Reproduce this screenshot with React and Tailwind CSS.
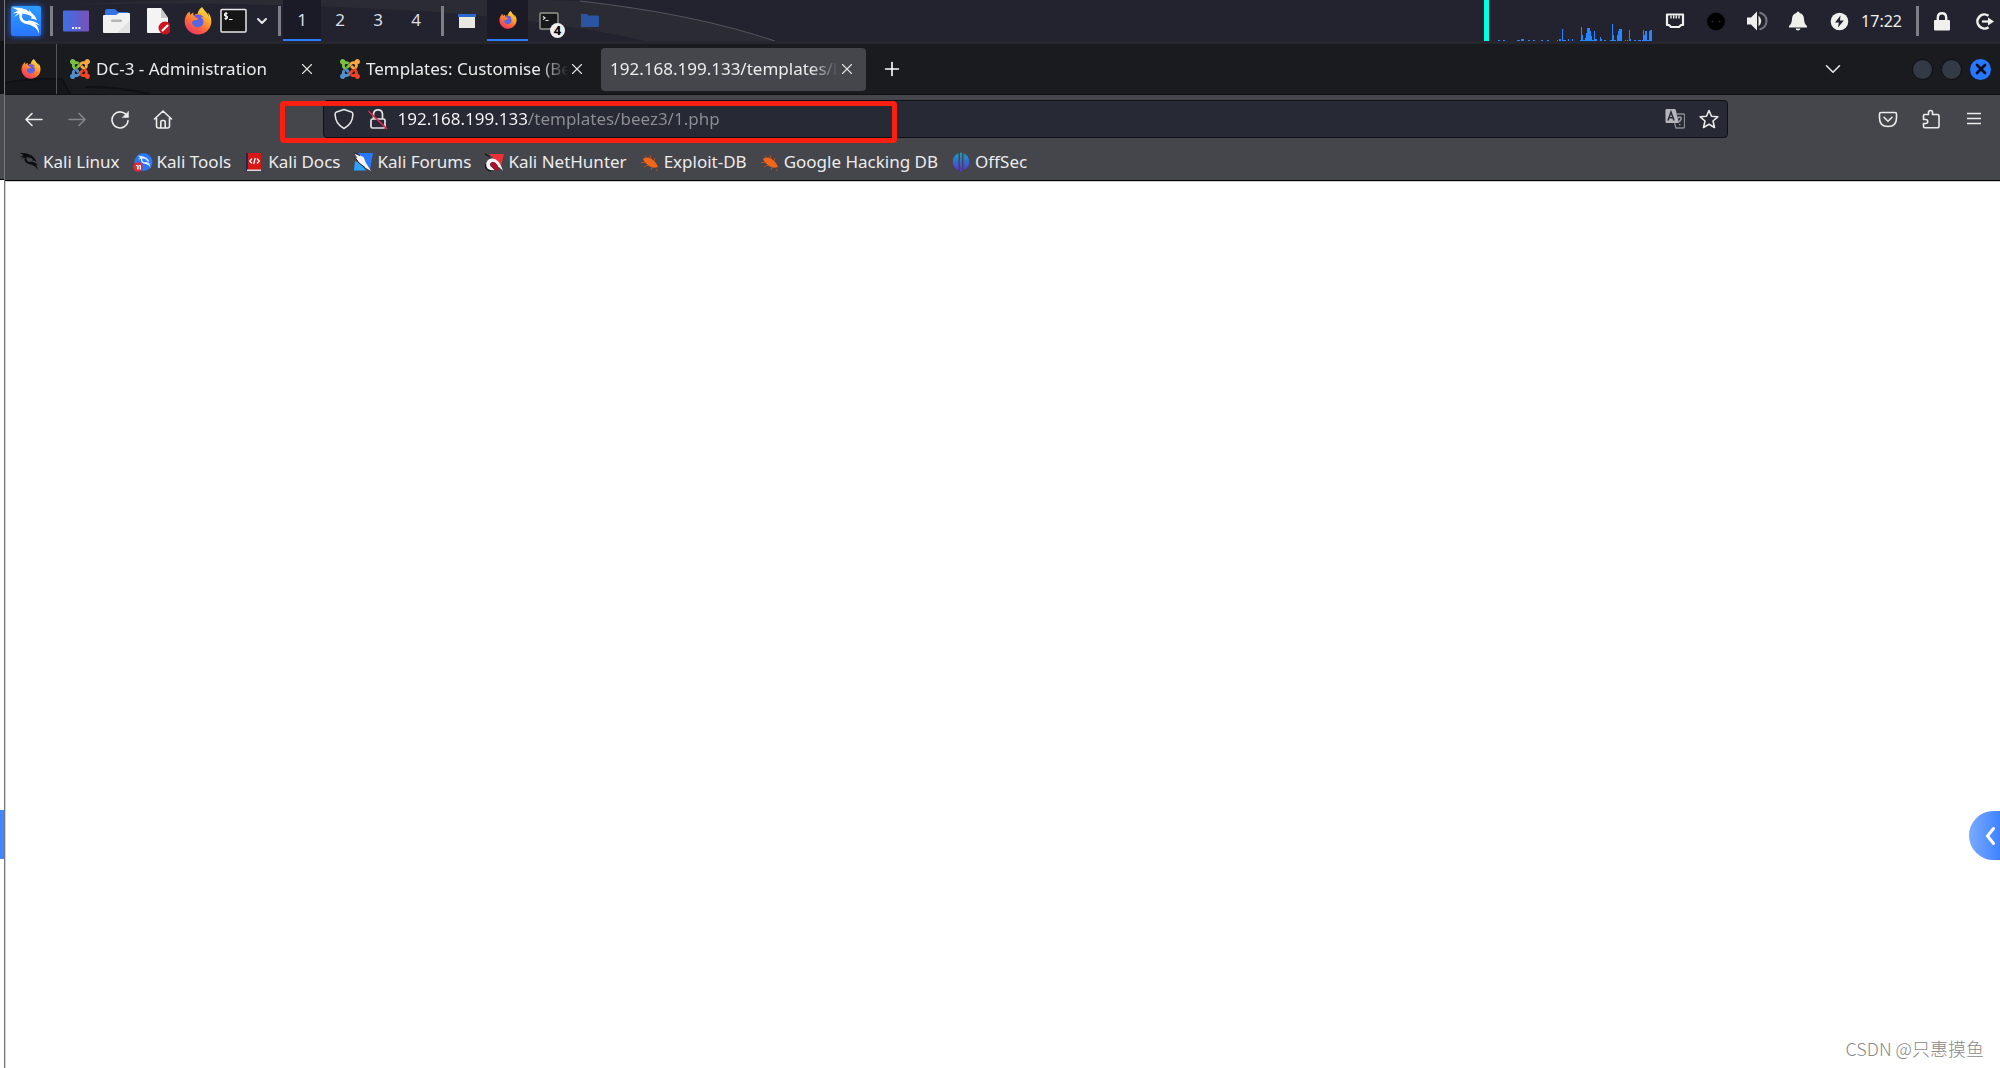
import React, { useState } from 'react'
import { FaFirefoxBrowser } from 'react-icons/fa'
import { SiJoomla } from 'react-icons/si'
import { ChevronDown, Plus, X } from 'lucide-react'

// [x, width, height] of each bar in the CPU graph
const CPU_BARS = [
  [9, 2, 1], [14, 2, 1], [28, 3, 1], [32, 3, 2], [39, 2, 1], [44, 2, 1], [52, 2, 1], [58, 2, 1],
  [68, 1, 1], [70, 2, 2], [73, 1, 12], [74, 3, 1], [79, 1, 2], [83, 1, 2], [91, 14, 1], [92, 1, 14],
  [93, 1, 6], [96, 1, 3], [97, 1, 8], [98, 3, 13], [101, 1, 10], [102, 1, 5], [105, 1, 10],
  [106, 2, 2], [111, 1, 4], [112, 1, 2], [115, 2, 1], [121, 6, 1], [123, 1, 17], [124, 1, 6],
  [128, 1, 6], [129, 1, 10], [130, 3, 12], [136, 1, 1], [138, 1, 1], [140, 1, 11], [141, 1, 2],
  [145, 2, 1], [149, 3, 1], [153, 9, 1], [154, 1, 11], [155, 1, 6], [156, 2, 10], [160, 1, 10], [161, 2, 11],
]

// Kali dragon on a 30x30 grid
const dragon = (
  <g fill="currentColor">
    <path d="M1 1.500Q9 1 15 3.500L18.500 6 18 3.500 21 7.500Q24 9 26 14.500L23 13 19.500 12.500Q22 11.500 19 9.500 15 7.800 11.500 7.500 9.800 13 14 14.700 22 15.500 25.500 19 28 22 28 27.500 26.500 23.500 24 21.500 20 18.500 13.500 17.500 7.500 15.500 8.300 7.800L3 11 7 6.800 1.500 7.500 7 4.500z" />
    <path d="M17 14.500Q24 14.500 29 19.500 24 17 17 17z" />
  </g>
)

function Firefox({ className }) {
  return (
    <svg viewBox="0 0 28 28" className={className} aria-hidden="true">
      <circle cx="14" cy="15" r="8" fill="url(#globe)" />
      <FaFirefoxBrowser size={28} fill="url(#fox)" />
    </svg>
  )
}

function Joomla() {
  const quarters = [
    ['jtl', '#7ac143'],
    ['jtr', '#f9a541'],
    ['jbl', '#5091cd'],
    ['jbr', '#f44321'],
  ]
  return (
    <svg viewBox="0 0 20 20" className="h-5 w-5 shrink-0" aria-hidden="true">
      {quarters.map(([id, color]) => (
        <g key={id} clipPath={`url(#${id})`}>
          <SiJoomla size={20} color={color} />
        </g>
      ))}
    </svg>
  )
}

// Gradients and clips shared by the icons
function Defs() {
  return (
    <svg className="absolute h-0 w-0" aria-hidden="true">
      <defs>
        <linearGradient id="fox" x1="0.85" y1="0" x2="0.25" y2="1">
          <stop offset="0" stopColor="#fff04a" />
          <stop offset="0.35" stopColor="#ffab2e" />
          <stop offset="0.65" stopColor="#ff6a3a" />
          <stop offset="1" stopColor="#f0306a" />
        </linearGradient>
        <linearGradient id="globe" x1="0" y1="1" x2="1" y2="0">
          <stop offset="0" stopColor="#3b78e8" />
          <stop offset="1" stopColor="#7b4fe0" />
        </linearGradient>
        <linearGradient id="desk" x1="0" y1="0" x2="1" y2="0">
          <stop offset="0" stopColor="#3b6fe8" />
          <stop offset="1" stopColor="#7a52b8" />
        </linearGradient>
        <linearGradient id="offsec" x1="0" y1="0" x2="0" y2="1">
          <stop offset="0" stopColor="#17a2b8" />
          <stop offset="1" stopColor="#5b2be0" />
        </linearGradient>
        <clipPath id="jtl"><path d="M0 0h10v10H0z" /></clipPath>
        <clipPath id="jtr"><path d="M10 0h10v10H10z" /></clipPath>
        <clipPath id="jbl"><path d="M0 10h10v10H0z" /></clipPath>
        <clipPath id="jbr"><path d="M10 10h10v10H10z" /></clipPath>
      </defs>
    </svg>
  )
}

const Separator = ({ className = '' }) => <span className={`h-[30px] w-[3px] shrink-0 bg-[#7d7e86] ${className}`} />

function Launchers() {
  return (
    <div className="flex items-center gap-3">
      <button aria-label="Show desktop">
        <svg viewBox="0 0 28 28" className="h-7 w-7">
          <rect x="1" y="3.5" width="26" height="21" rx="1" fill="url(#desk)" />
          <path d="M10 20h2v2h-2zM13.200 20h2v2h-2zM16.400 20h2v2h-2z" fill="#e8ecff" />
        </svg>
      </button>
      <button aria-label="Files">
        <svg viewBox="0 0 28 28" className="h-7 w-7">
          <path d="M3 4q0-2 2-2h8l3 3h9q2 0 2 2v8H3z" fill="#3572e3" />
          <path d="M1 9q0-1 1-1h12l3-2h10q1 0 1 1v18q0 1-1 1H2q-1 0-1-1z" fill="#f1f1f1" />
          <path d="M28 13v12q0 1-1 1H15z" fill="#e2e2e2" />
          <rect x="9" y="12.500" width="11" height="2.500" rx="1" fill="#b5b5b5" />
        </svg>
      </button>
      <button aria-label="Text editor">
        <svg viewBox="0 0 28 28" className="h-7 w-7">
          <path d="M5 2q0-1 1-1h13l7 10v14q0 1-1 1H6q-1 0-1-1z" fill="#f4f4f4" />
          <path d="M19 1l7 10h-7z" fill="#c9c9c9" />
          <circle cx="23" cy="21" r="6.500" fill="#cf1420" />
          <path d="M20.500 23.500l5-5" stroke="#fff" strokeWidth="2" strokeLinecap="round" />
        </svg>
      </button>
      <button aria-label="Firefox" className="ml-0.5">
        <Firefox className="h-7 w-7" />
      </button>
      <button aria-label="Terminal" className="-ml-1">
        <svg viewBox="0 0 28 28" className="h-7 w-7">
          <rect x="1" y="2.500" width="25" height="22.500" rx="1" fill="#151515" stroke="#e8e8e8" strokeWidth="1.500" />
          <path d="M7.500 6.500q-3-.6-3 1t1.500 1.500 1.500 1.500-3 1M6 5v8M9 12.500h3.500" stroke="#fff" strokeWidth="1.200" fill="none" />
        </svg>
      </button>
    </div>
  )
}

function Tasks() {
  const item = 'relative flex h-[41px] w-[41px] items-center justify-center'
  return (
    <div className="ml-0.5 flex">
      <button aria-label="Window" className={item}>
        <svg viewBox="0 0 18 16" className="h-4 w-[18px]">
          <path d="M0 1h18v3H0z" fill="#2c69cf" />
          <path d="M1 4h16v11H1z" fill="#e9e9e2" />
        </svg>
      </button>
      <button aria-label="Firefox window" className={`${item} border-b-2 border-[#2b7bff] bg-[#1a1b26]`}>
        <Firefox className="h-[18px] w-[18px]" />
      </button>
      <button aria-label="Terminal windows" className={item}>
        <svg viewBox="0 0 20 18" className="h-[18px] w-5">
          <rect x="1" y="1" width="18" height="16" rx="1" fill="#17181a" stroke="#97978f" strokeWidth="1.400" />
          <path d="M4 4.500l2 1.500-2 1.500M6.500 8.500h3" stroke="#e8e8e8" strokeWidth="1.200" fill="none" />
        </svg>
        <span className="absolute bottom-[3px] right-1 h-[15px] w-[15px] rounded-full bg-[#eeeeee] text-[13px] font-bold leading-[15px] text-black">4</span>
      </button>
      <button aria-label="Files window" className={item}>
        <svg viewBox="0 0 18 14" className="h-3.5 w-[18px]">
          <path d="M0 1q0-1 1-1h5l1.500 1.500H17q1 0 1 1V12q0 1-1 1H1q-1 0-1-1z" fill="#2b55a0" />
        </svg>
      </button>
    </div>
  )
}

function Tray() {
  const item = 'flex h-[41px] w-[41px] items-center justify-center text-[#f0f0ec]'
  return (
    <div className="ml-auto flex items-center">
      <div className="h-[41px] w-[5px] bg-[#00ffe0]" />
      <svg viewBox="0 0 165 41" className="h-[41px] w-[165px]" shapeRendering="crispEdges" aria-label="CPU graph">
        {CPU_BARS.map(([x, w, h]) => (
          <rect key={x} x={x} y={41 - h} width={w} height={h} fill="#2686ff" />
        ))}
      </svg>
      <button aria-label="Network" className={item}>
        <svg viewBox="0 0 20 18" className="h-[18px] w-5" fill="none" stroke="currentColor">
          <path d="M2 2.500h16v10.500h-2l-2 2H6L4 13H2z" strokeWidth="2.200" strokeLinejoin="round" />
          <path d="M6 3.500v3M8.700 3.500v3M11.300 3.500v3M14 3.500v3" strokeWidth="1.400" />
        </svg>
      </button>
      <button aria-label="Clipboard" className={item}>
        <svg viewBox="0 0 20 20" className="h-5 w-5">
          <circle cx="10" cy="10.500" r="9" fill="#000" />
          <circle cx="6.500" cy="10.500" r="1.100" fill="#25262c" />
          <circle cx="13.500" cy="10.500" r="1.100" fill="#25262c" />
        </svg>
      </button>
      <button aria-label="Volume" className={item}>
        <svg viewBox="0 0 22 22" className="h-[22px] w-[22px]" fill="none">
          <path d="M1 7.500h4L11 1.500v19L5 14.500H1z" fill="currentColor" />
          <path d="M12.500 5.500q5.500 5.500 0 11z" fill="currentColor" />
          <path d="M13.500 2.500q7 2 7 8.500t-7 8.500" stroke="#74757f" strokeWidth="2" />
        </svg>
      </button>
      <button aria-label="Notifications" className={item}>
        <svg viewBox="0 0 20 20" className="h-5 w-5" fill="currentColor">
          <path d="M10 .5q1.500 0 1.500 1.600Q15.800 3.300 16 8q.2 5 3 7v1.500H1V15q2.800-2 3-7 .2-4.700 4.500-5.900Q8.500.5 10 .5zM7.500 17.500h5Q12 19.500 10 19.500t-2.500-2z" />
        </svg>
      </button>
      <button aria-label="Power" className={item}>
        <svg viewBox="0 0 20 20" className="h-5 w-5">
          <circle cx="10.500" cy="10.500" r="8.800" fill="currentColor" />
          <path d="M11.500 4.500L6 11.500h3.800L9 16.500l5.800-7H11z" fill="#22232f" />
        </svg>
      </button>
      <time className="ml-0.5 mr-3.5 text-base text-[#f0f0ec]">17:22</time>
      <Separator className="mr-[7px]" />
      <div className="flex gap-2.5">
        <button aria-label="Lock" className="flex w-8 justify-center text-[#f0f0ec]">
          <svg viewBox="0 0 18 20" className="h-5 w-[18px]">
            <path d="M4.800 9V6.500Q5 2.200 9 2.200t4.200 4.300V9" fill="none" stroke="currentColor" strokeWidth="2.400" />
            <rect x="1" y="9" width="16" height="10.500" rx="1" fill="currentColor" />
          </svg>
        </button>
        <button aria-label="Log out" className="flex w-8 justify-center text-[#f0f0ec]">
          <svg viewBox="0 0 20 20" className="h-5 w-5" fill="none" stroke="currentColor">
            <path d="M14.500 4.800A7 7 0 1 0 14.500 16.200" strokeWidth="2.600" />
            <path d="M8 10.500h7" strokeWidth="2.200" />
            <path d="M14 6.500l6 4-6 4z" fill="currentColor" stroke="none" />
          </svg>
        </button>
      </div>
    </div>
  )
}

function TaskBar() {
  const [workspace, setWorkspace] = useState(1)
  return (
    <header className="relative flex h-[41px] items-center bg-[#22232f]">
      {/* Wallpaper showing through the panel */}
      <svg className="absolute left-0 top-0 h-[41px] w-[800px]" viewBox="0 0 800 41" aria-hidden="true">
        <path d="M60 5Q300-8 575 1 690 14 770 41H640Q560 22 430 12 240 0 60 5z" fill="#2b2b33" />
        <path d="M575 1Q690 14 770 41" fill="none" stroke="#54555b" />
      </svg>
      <div className="relative flex grow items-center">
        <button aria-label="Applications" className="ml-1.5 mr-[9px] h-[30px] w-[30px] rounded-xs bg-linear-to-b from-[#2d9cff] to-[#2a74ff] text-white shadow-[0_0_6px_#2070ff]">
          <svg viewBox="0 0 30 30" className="h-[30px] w-[30px]">{dragon}</svg>
        </button>
        <Separator className="mr-[9px]" />
        <Launchers />
        <button aria-label="More terminals" className="ml-1.5 mr-2 text-[#e6e6e6]">
          <ChevronDown size={16} strokeWidth={3} />
        </button>
        <Separator className="mr-0.5" />
        <div className="mr-1.5 flex">
          {[1, 2, 3, 4].map(n => (
            <button
              key={n}
              onClick={() => setWorkspace(n)}
              className={`h-[41px] w-[38px] border-b-2 text-[17px] text-[#dcdfe6] ${
                n === workspace ? 'border-[#2b7bff] bg-[#1a1b26]' : 'border-transparent'
              }`}
            >
              {n}
            </button>
          ))}
        </div>
        <Separator />
        <Tasks />
        <Tray />
      </div>
    </header>
  )
}

const TABS = [
  { title: 'DC-3 - Administration', joomla: true },
  { title: 'Templates: Customise (Beez3)', joomla: true },
  { title: '192.168.199.133/templates/beez3/1.php', active: true },
]

function TabBar() {
  return (
    <div className="relative flex h-[54px] items-center border-b border-[#0f1013] border-t-[3px] border-t-[#26272e] bg-[#1a1b1f]">
      <svg className="absolute bottom-0 left-0 h-4 w-[170px]" viewBox="0 0 170 16" fill="none" aria-hidden="true">
        <path d="M0 5Q25 0 57 1L65 16H0z" fill="#15161a" />
        <path d="M0 5Q25 0 57 1L65 16M80 9Q110 8 145 16" stroke="#101114" strokeWidth="2" />
      </svg>
      <button aria-label="Firefox View" className="relative flex h-full w-[52px] items-center justify-center border-r border-[#55565a]">
        <Firefox className="h-5 w-5" />
      </button>
      <div className="relative ml-1 flex gap-[5px]">
        {TABS.map(tab => (
          <div
            key={tab.title}
            className={`flex h-[43px] w-[265px] items-center rounded pl-[9px] pr-[10px] ${tab.active ? 'bg-[#44464c]' : ''}`}
          >
            {tab.joomla && <span className="mr-1.5"><Joomla /></span>}
            <span className="min-w-0 grow overflow-hidden whitespace-nowrap text-[17px] text-[#ececec] [mask-image:linear-gradient(to_left,transparent,black_28px)]">
              {tab.title}
            </span>
            <button aria-label="Close tab" className="flex w-[18px] justify-center text-[#e4e4e4]">
              <X size={18} strokeWidth={1.5} />
            </button>
          </div>
        ))}
      </div>
      <button aria-label="New tab" className="ml-[13px] flex w-[26px] justify-center text-white">
        <Plus size={22} strokeWidth={1.75} />
      </button>
      <button aria-label="List all tabs" className="ml-auto mr-[66px] text-[#e4e4e4]">
        <ChevronDown size={26} strokeWidth={1.5} />
      </button>
      <div className="mr-[9px] flex gap-2">
        <button aria-label="Minimise" className="h-[21px] w-[21px] rounded-full border border-[#0c0d10] bg-[#343946]" />
        <button aria-label="Maximise" className="h-[21px] w-[21px] rounded-full border border-[#0c0d10] bg-[#343946]" />
        <button aria-label="Close" className="flex h-[21px] w-[21px] items-center justify-center rounded-full bg-[#2777ff] text-[#0b0f1a]">
          <X size={16} strokeWidth={4} />
        </button>
      </div>
    </div>
  )
}

function NavIcon({ label, children, className = 'text-[#ececec]' }) {
  return (
    <button aria-label={label} className={`flex w-[43px] shrink-0 justify-center ${className}`}>
      <svg viewBox="0 0 20 20" className="h-5 w-5" fill="none" stroke="currentColor" strokeWidth="1.600" strokeLinecap="round" strokeLinejoin="round">
        {children}
      </svg>
    </button>
  )
}

function NavBar() {
  const [url, setUrl] = useState('192.168.199.133/templates/beez3/1.php')
  return (
    <div className="flex h-12 items-center pl-[7px] pr-1">
      <NavIcon label="Back"><path d="M18 10.500H2M8 4.500l-6 6 6 6" /></NavIcon>
      <NavIcon label="Forward" className="text-[#85868a]"><path d="M2 10.500h16M12 4.500l6 6-6 6" /></NavIcon>
      <NavIcon label="Reload">
        <path d="M17 7A8 8 0 1 0 18 11.500" />
        <path d="M18.500 2.500v6h-6z" fill="currentColor" strokeWidth="0.500" />
      </NavIcon>
      <NavIcon label="Home">
        <path d="M1.500 10L10 2l8.500 8M3.500 9v8q0 2 2 2h9q2 0 2-2V9M7.800 18.500V13q0-1.500 1.500-1.500h1.400q1.500 0 1.500 1.500v5.500" />
      </NavIcon>
      <div className="flex-1" />
      <div className="relative flex h-[38px] flex-10 items-center rounded border border-[#0f1013] bg-[#272934] pl-[10px] pr-2">
        <svg viewBox="0 0 20 22" className="h-[22px] w-5" fill="none" stroke="#e4e4e4" strokeWidth="1.600" strokeLinejoin="round" aria-hidden="true">
          <path d="M10 1.500L17.500 4q1.500.5 1.400 2.500-.3 9.500-8.900 14Q1.400 16 1.100 6.500 1 4.500 2.500 4z" />
        </svg>
        <svg viewBox="0 0 20 22" className="ml-3.5 h-[22px] w-5" fill="none" stroke="#e4e4e4" strokeWidth="1.700" strokeLinejoin="round" aria-hidden="true">
          <path d="M5.500 11V6Q5.800 1.800 10 1.800T14.500 6v5" />
          <rect x="3" y="11" width="14" height="9" rx="1.500" />
          <path d="M1 3.500L18.500 20.500" stroke="#e22850" strokeLinecap="round" />
        </svg>
        {/* The host is brighter than the path */}
        <input
          aria-label="Address"
          value={url}
          onChange={e => setUrl(e.target.value)}
          className="ml-2.5 min-w-0 grow bg-[linear-gradient(to_right,#fbfbfe_131px,#8e8f96_131px)] bg-clip-text text-[17px] text-transparent caret-white outline-none"
        />
        <button aria-label="Translate page">
          <svg viewBox="0 0 20 20" className="h-5 w-5">
            <path d="M1.500 0h8q1 0 1.300 1L14 14H1.500Q.5 14 .5 13V1Q.5 0 1.500 0z" fill="#b5b6ba" />
            <path d="M11.500 5H18.500q1 0 1 1v12q0 1-1 1h-7.500L9.500 14" fill="none" stroke="#8b8c92" strokeWidth="1.300" />
            <path d="M3 11.500L6 3l3 8.500M4 8.800h4" fill="none" stroke="#272934" strokeWidth="1.500" />
            <path d="M13.200 9.500q0-1.500 1.500-1.500t1.500 1.500-1.500 2.500v1.200M14.700 15v1.200" fill="none" stroke="#a0a1a6" strokeWidth="1.500" />
          </svg>
        </button>
        <button aria-label="Bookmark this page" className="ml-3.5">
          <svg viewBox="0 0 20 20" className="h-5 w-5" fill="none" stroke="#e8e8e8" strokeWidth="1.600" strokeLinejoin="round">
            <path d="M10 1.500l2.500 5.800 6.300.5-4.800 4.200 1.500 6.500L10 15.200 4.500 18.500 6 12 1.200 7.800l6.300-.5z" />
          </svg>
        </button>
        <div className="pointer-events-none absolute -left-[44px] top-0 z-10 h-[42px] w-[617px] rounded border-[5px] border-[#fb1f12]" />
      </div>
      <div className="flex-1" />
      <NavIcon label="Save to Pocket">
        <path d="M3 3.500h14q1.500 0 1.500 1.500v4q0 8.500-8.500 8.500T1.500 9V5Q1.500 3.500 3 3.500zM6 8.300l4 4 4-4" />
      </NavIcon>
      <NavIcon label="Extensions">
        <path d="M2.500 8V6.500q0-1 1-1H7.500V3.500q0-2 2-2t2 2v2h5q1.500 0 1.500 1.500v10q0 1.800-1.800 1.800H4q-1.500 0-1.500-1.500V14.500h2.200q2 0 2-2t-2-2H2.500z" />
      </NavIcon>
      <NavIcon label="Menu"><path d="M3 4.500h14M3 9.500h14M3 14.500h14" strokeLinecap="butt" /></NavIcon>
    </div>
  )
}

const bug = (
  <>
    <path d="M3 7q4-2.500 8-.5 5 3 7 8.500-4.500 1.500-8-.5Q5 12 3 7z" fill="#f2651a" />
    <path d="M5 3.500l3 3M10 3l1 4M1 10.500l5 0M4 15l4-2M15 6l-1 3M11 18l1-3M16 17.500l2 1" stroke="#b8501c" strokeWidth="1" />
  </>
)

const BOOKMARKS = [
  {
    name: 'Kali Linux',
    icon: <g color="#0c0c0e" transform="scale(.67)">{dragon}</g>,
  },
  {
    name: 'Kali Tools',
    icon: (
      <>
        <circle cx="10.500" cy="10" r="9" fill="#2777ff" />
        <g color="#e3edff" transform="translate(4 3) scale(.48)">{dragon}</g>
        <circle cx="5" cy="15" r="4.800" fill="#e02a35" />
        <path d="M3 13.500h1.500v4M5.800 17.500v-4h1.700v4" stroke="#fff" fill="none" />
      </>
    ),
  },
  {
    name: 'Kali Docs',
    icon: (
      <>
        <path d="M3 1h14v18H3z" fill="#d81717" />
        <path d="M2 1h2v18H2z" fill="#1b2b50" />
        <path d="M3 17.500h14V19H3z" fill="#d9d9d9" />
        <path d="M8 6.500L5.800 9 8 11.500M13 6.500L15.200 9 13 11.500M11.200 6l-1.500 6" stroke="#fff" strokeWidth="1.300" fill="none" />
      </>
    ),
  },
  {
    name: 'Kali Forums',
    icon: (
      <>
        <path d="M5 1h15l-3 17-8-5z" fill="#2777ff" />
        <path d="M2 9l5 2 6 7.500H1z" fill="#2aa5ff" />
        <path d="M1 1l6 2.500 3.500 1.500 2.500 6 5 8-6-3.500L6 11 2 5.500 4.500 6z" fill="#f4f4f4" />
        <path d="M1 1l6 2.500M2 5.500L6 11l6 4.500" stroke="#17181c" strokeWidth="1" fill="none" />
      </>
    ),
  },
  {
    name: 'Kali NetHunter',
    icon: (
      <>
        <path d="M5 2h15l-3 12-6-6z" fill="#ee2f36" />
        <path d="M2 14Q2 6 9 6.500q6 .5 10 12l-5-4Q12 10 9 10q-4 .5-2.500 4l4 4H6q-4-1-4-4z" fill="#f4f4f4" />
        <path d="M6.500 14q-1-3.500 2-4 3.500 0 5.500 4.500l2 4-5-.5z" fill="#a3122b" />
        <path d="M1 2l5 3M1.500 12Q1 18 7 19" stroke="#17181c" strokeWidth="1.300" fill="none" />
      </>
    ),
  },
  { name: 'Exploit-DB', icon: bug },
  { name: 'Google Hacking DB', icon: bug },
  {
    name: 'OffSec',
    icon: <path d="M7.500 1.200v17A9.200 9.200 0 0 1 7.500 1.200zM9 .8h2v19H9zM12.500 1.200a9.200 9.200 0 0 1 0 17z" fill="url(#offsec)" />,
  },
]

function Bookmarks() {
  return (
    <nav className="flex h-[37px] items-center gap-[13px] pl-3.5">
      {BOOKMARKS.map(({ name, icon }) => (
        <a key={name} href="#" className="flex items-center gap-1 whitespace-nowrap text-[17px] text-[#ececec]">
          <svg viewBox="0 0 20 20" className="h-5 w-5 shrink-0" aria-hidden="true">{icon}</svg>
          {name}
        </a>
      ))}
    </nav>
  )
}

export default function App() {
  return (
    <div className="relative flex min-h-screen bg-white font-['Noto_Sans','Noto_Sans_CJK_SC',sans-serif]">
      <Defs />
      <div className="w-1 shrink-0">
        <div className="h-[41px] bg-[#20212c]" />
        <div className="h-[53px] bg-[#121317]" />
        <div className="h-[86px] border-b border-black bg-[#4a4c52]" />
      </div>
      <div className="flex min-w-0 grow flex-col border-l border-[#77787b]">
        <TaskBar />
        <TabBar />
        <div className="border-b border-black bg-[#44464c]">
          <NavBar />
          <Bookmarks />
        </div>
        <main className="grow border-l border-t border-[#d0d0d0]" />
      </div>

      <div className="absolute bottom-[209px] left-0 h-[49px] w-1 bg-[#3f86ff]" />
      <button aria-label="Open side panel" className="absolute bottom-52 right-0 flex h-[49px] w-[31px] items-center justify-end rounded-l-full bg-linear-to-r from-[#79aaff] to-[#3f83ff] pr-1 text-white">
        <svg viewBox="0 0 12 20" className="h-5 w-3" fill="none" stroke="currentColor" strokeWidth="3" strokeLinecap="round">
          <path d="M9.500 2.500L3.500 10l6 7.500" />
        </svg>
      </button>
      <p className="absolute bottom-2 right-4 font-['Noto_Sans_CJK_SC',sans-serif] text-[18px] font-light leading-6 text-[#8a8a8a]">CSDN @只惠摸鱼</p>
    </div>
  )
}
